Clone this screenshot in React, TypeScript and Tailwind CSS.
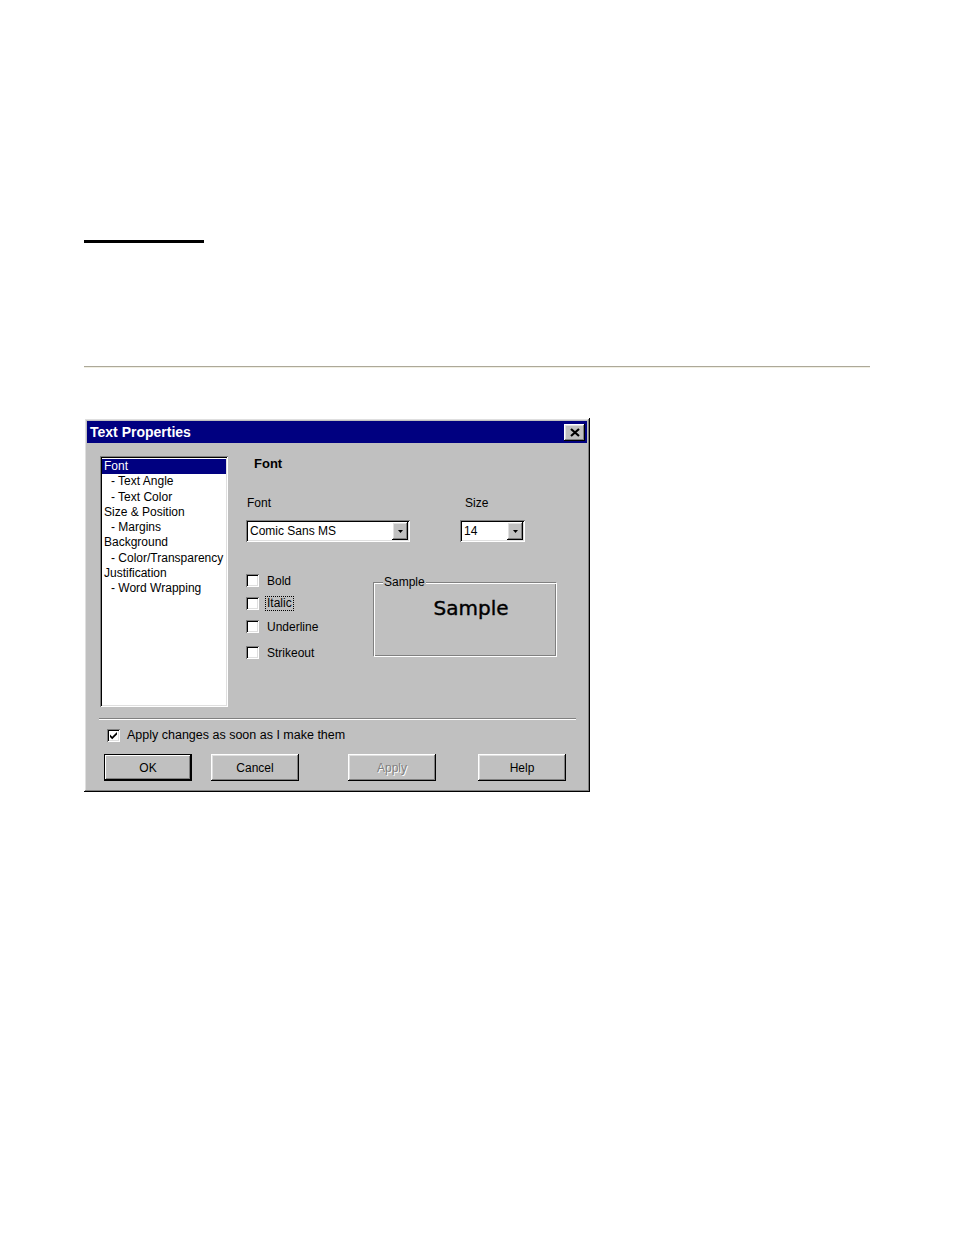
import React from "react";

const raised =
  "shadow-[inset_-1px_-1px_#000,inset_1px_1px_#fff,inset_-2px_-2px_#808080,inset_2px_2px_#dfdfdf]";
const sunken =
  "shadow-[inset_1px_1px_#808080,inset_-1px_-1px_#fff,inset_2px_2px_#000,inset_-2px_-2px_#dfdfdf]";

const listItems = [
  { label: "Font", sub: false, selected: true },
  { label: "- Text Angle", sub: true },
  { label: "- Text Color", sub: true },
  { label: "Size & Position", sub: false },
  { label: "- Margins", sub: true },
  { label: "Background", sub: false },
  { label: "- Color/Transparency", sub: true },
  { label: "Justification", sub: false },
  { label: "- Word Wrapping", sub: true },
];

const Checkbox = ({ checked = false }: { checked?: boolean }) => (
  <div className={`w-[13px] h-[13px] bg-white shrink-0 flex items-center justify-center ${sunken}`}>
    {checked && (
      <svg width="9" height="9" viewBox="0 0 9 9">
        <path d="M1 3.5 L3.2 5.7 L8 1 L8 3.6 L3.2 8.2 L1 6 Z" fill="#000" />
      </svg>
    )}
  </div>
);

const Combo = ({ value, width }: { value: string; width: string }) => (
  <div className={`${width} h-[22px] bg-white flex items-center p-[2px] ${sunken}`}>
    <span className="flex-1 pl-[2px] leading-none">{value}</span>
    <div className={`w-[16px] h-[18px] bg-[#c0c0c0] flex items-center justify-center ${raised}`}>
      <svg width="5" height="3" viewBox="0 0 5 3">
        <path d="M0 0 H5 L2.5 3 Z" fill="#000" />
      </svg>
    </div>
  </div>
);

const Button = ({
  label,
  className = "",
  isDefault = false,
  disabled = false,
}: {
  label: string;
  className?: string;
  isDefault?: boolean;
  disabled?: boolean;
}) => (
  <div
    className={`w-[88px] h-[27px] flex items-center justify-center bg-[#c0c0c0] ${
      isDefault
        ? "border border-black shadow-[inset_-1px_-1px_#000,inset_1px_1px_#fff,inset_-2px_-2px_#808080]"
        : raised
    } ${disabled ? "text-[#808080] [text-shadow:1px_1px_0_#fff]" : "text-black"} ${className}`}
  >
    {label}
  </div>
);

export default function App() {
  return (
    <div
      className="min-h-[1235px] bg-white pl-[84px] pt-[240px] text-[12px] text-black"
      style={{ fontFamily: '"Liberation Sans", Arial, sans-serif' }}
    >
      <div className="h-[3px] w-[120px] bg-black" />
      <div className="mt-[123px] w-[786px] border-t border-b border-t-[#aca899] border-b-[#f1efe2]" />

      {/* Dialog */}
      <div className={`mt-[50px] w-[506px] h-[374px] bg-[#c0c0c0] p-[3px] ${raised}`}>
        {/* Title bar */}
        <div className="h-[22px] bg-[#000080] flex items-center justify-between pl-[3px] pr-[2px]">
          <span className="text-white font-bold text-[14px]">Text Properties</span>
          <div className={`w-[21px] h-[17px] bg-[#c0c0c0] flex items-center justify-center ${raised}`}>
            <svg width="10" height="9" viewBox="0 0 10 9">
              <path d="M1 1 L9 8 M9 1 L1 8" stroke="#000" strokeWidth="2.2" />
            </svg>
          </div>
        </div>

        {/* Body */}
        <div className="flex pl-[13px] pt-[13px]">
          {/* List */}
          <div className={`w-[128px] h-[251px] bg-white pt-[3px] px-[2px] overflow-hidden ${sunken}`}>
            {listItems.map((item, i) => (
              <div
                key={i}
                className={`h-[15.3px] leading-[15px] whitespace-nowrap ${item.sub ? "pl-[9px]" : "pl-[2px]"} ${
                  item.selected ? "bg-[#000080] text-white" : ""
                }`}
              >
                {item.label}
              </div>
            ))}
          </div>

          {/* Right panel */}
          <div className="ml-[18px] w-[320px]">
            <div className="ml-[8px] font-bold text-[13px] leading-[15px]">Font</div>

            <div className="flex mt-[25px] leading-[15px]">
              <span className="ml-[1px] w-[213px]">Font</span>
              <span className="ml-[5px]">Size</span>
            </div>

            <div className="flex mt-[9px]">
              <Combo value="Comic Sans MS" width="w-[164px]" />
              <div className="ml-[50px]">
                <Combo value="14" width="w-[65px]" />
              </div>
            </div>

            <div className="flex mt-[31px]">
              <div className="w-[127px]">
                <div className="flex items-center h-[15px]">
                  <Checkbox />
                  <span className="ml-[8px]">Bold</span>
                </div>
                <div className="flex items-center h-[15px] mt-[8px]">
                  <Checkbox />
                  <span className="ml-[7px] px-[1px] leading-[13px] outline-1 outline-dotted outline-black">Italic</span>
                </div>
                <div className="flex items-center h-[15px] mt-[8px]">
                  <Checkbox />
                  <span className="ml-[8px]">Underline</span>
                </div>
                <div className="flex items-center h-[15px] mt-[11px]">
                  <Checkbox />
                  <span className="ml-[8px]">Strikeout</span>
                </div>
              </div>

              <div className="relative mt-[9px] w-[184px] h-[75px] border border-t-[#808080] border-l-[#808080] border-b-white border-r-white shadow-[inset_1px_1px_#fff,inset_-1px_-1px_#808080]">
                <span className="absolute -top-[8px] left-[9px] bg-[#c0c0c0] px-[1px] leading-[15px]">Sample</span>
                <div
                  className="pt-[13px] pl-[12px] text-center text-[20px] leading-[24px] [-webkit-text-stroke:0.4px_#000]"
                  style={{ fontFamily: '"Comic Sans MS", "DejaVu Sans", sans-serif' }}
                >
                  Sample
                </div>
              </div>
            </div>
          </div>
        </div>

        {/* Separator */}
        <div className="ml-[12px] mt-[11px] w-[477px] border-t border-b border-t-[#808080] border-b-white" />

        <div className="flex items-center h-[15px] mt-[8px] ml-[20px]">
          <Checkbox checked />
          <span className="ml-[7px] text-[12.5px]">Apply changes as soon as I make them</span>
        </div>

        <div className="flex mt-[11px] ml-[17px]">
          <Button label="OK" isDefault />
          <Button label="Cancel" className="ml-[19px]" />
          <Button label="Apply" className="ml-[49px]" disabled />
          <Button label="Help" className="ml-[42px]" />
        </div>
      </div>
    </div>
  );
}
